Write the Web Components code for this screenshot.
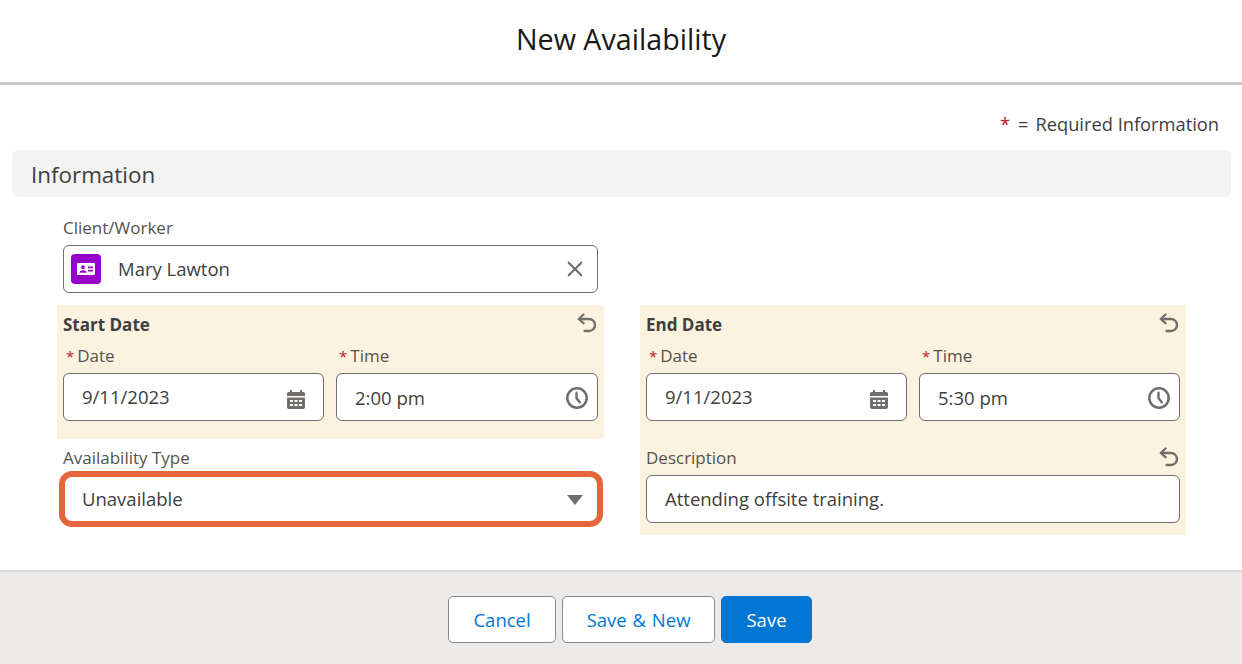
<!DOCTYPE html>
<html lang="en"><head><meta charset="utf-8"><title>New Availability</title>
<style>
html,body{margin:0;padding:0;height:664px;overflow:hidden;background:#fff;font-family:"Open Sans","Noto Sans",sans-serif;color:#3e3e3c}
</style></head><body>
<avail-modal>
  <modal-header slot="header">New Availability</modal-header>
  <required-note>Required Information</required-note>
  <section-title>Information</section-title>
  <form-grid>
    <lookup-row>
      <form-field label="Client/Worker"><text-box value="Mary Lawton" leading="contact" icon="close"></text-box></form-field>
    </lookup-row>
    <form-col>
      <edit-panel height="134">
        <group-title undo>Start Date</group-title>
        <field-pair>
          <form-field label="Date" required><text-box value="9/11/2023" icon="calendar"></text-box></form-field>
          <form-field label="Time" required><text-box value="2:00 pm" icon="clock"></text-box></form-field>
        </field-pair>
      </edit-panel>
      <plain-block>
        <form-field label="Availability Type"><text-box value="Unavailable" icon="caret" highlight></text-box></form-field>
      </plain-block>
    </form-col>
    <form-col>
      <edit-panel height="230">
        <group-title undo>End Date</group-title>
        <field-pair>
          <form-field label="Date" required><text-box value="9/11/2023" icon="calendar"></text-box></form-field>
          <form-field label="Time" required><text-box value="5:30 pm" icon="clock"></text-box></form-field>
        </field-pair>
        <desc-block>
          <form-field label="Description" undo><text-box value="Attending offsite training."></text-box></form-field>
        </desc-block>
      </edit-panel>
    </form-col>
  </form-grid>
  <modal-footer>
    <action-btn>Cancel</action-btn>
    <action-btn>Save &amp; New</action-btn>
    <action-btn brand>Save</action-btn>
  </modal-footer>
</avail-modal>
<script>
const UNDO='<svg class="undo" viewBox="0 0 20 20" width="20" height="20" fill="none" stroke="#706e6b" stroke-width="2.300" stroke-linecap="round" stroke-linejoin="round"><path d="M6.500 1.500 1.800 6 6.500 10.200"/><path d="M2.200 6H12a6 6 0 0 1 0 12H7.500"/></svg>';
const ICONS={
 close:'<svg viewBox="0 0 16 16" width="16" height="16" fill="none" stroke="#706e6b" stroke-width="2.100" stroke-linecap="round" style="margin-right:3px"><path d="M1.700 1.700 14.300 14.300M14.300 1.700 1.700 14.300"/></svg>',
 calendar:'<svg viewBox="0 0 18 20" width="18" height="20" style="margin:6px 7px 0 0"><path fill="#706e6b" d="M3 1h2v2h8V1h2v2h1.500A1.500 1.500 0 0 1 18 4.500V7H0V4.500A1.500 1.500 0 0 1 1.500 3H3zM0 8.500h18V18a2 2 0 0 1-2 2H2a2 2 0 0 1-2-2z"/><path fill="#fff" d="M3 11h3v2H3zM7.500 11h3v2h-3zM12 11h3v2h-3zM3 15h3v2H3zM7.500 15h3v2h-3zM12 15h3v2h-3z"/></svg>',
 clock:'<svg viewBox="0 0 22 22" width="22" height="22" fill="none" stroke="#706e6b" style="margin:4px -2px 0 0"><circle cx="11" cy="11" r="9.700" stroke-width="2.500"/><path d="M10.500 5.800v5.400l3.300 4" stroke-width="2.400" stroke-linecap="round" stroke-linejoin="round"/></svg>',
 caret:'<svg viewBox="0 0 16 10" width="16" height="10" style="margin:4px 3px 0 0"><path fill="#706e6b" d="M0 0h16L8 10z"/></svg>'
};
function def(name,css,html){
  customElements.define(name,class extends HTMLElement{
    connectedCallback(){
      if(this.shadowRoot)return;
      const r=this.attachShadow({mode:'open'});
      r.innerHTML='<style>'+css+'</style>'+(typeof html==='function'?html(this):html);
    }
  });
}
def('avail-modal',':host{display:flex;flex-direction:column;height:664px}main{flex:1;display:flex;flex-direction:column;min-height:0}','<slot name="header"></slot><main><slot></slot></main>');
def('modal-header',':host{display:flex;flex:none;align-items:center;justify-content:center;box-sizing:border-box;height:85px;border-bottom:3px solid #c9c9c9;padding-bottom:5px;font-size:28.700px;color:#181818}','<slot></slot>');
def('required-note',':host{display:flex;justify-content:flex-end;align-items:center;height:24px;margin-top:26px;margin-bottom:1px;padding-right:23px;font-size:18.300px;color:#3e3e3c}i{font-style:normal;color:#c4142e;margin-right:8px}b{font-weight:400;margin-right:7px}','<i>*</i><b>=</b><span><slot></slot></span>');
def('section-title',':host{display:block;box-sizing:border-box;height:47px;line-height:49px;margin:14px 11px 0 12px;padding-left:19px;background:#f3f3f3;border-radius:6px;font-size:22.400px;color:#3e3e3c}','<slot></slot>');
def('form-grid',':host{display:grid;grid-template-columns:547px 546px;column-gap:36px;padding:20px 0 0 57px}','<slot></slot>');
def('lookup-row',':host{display:block;grid-column:1;padding:0 6px;height:88px}','<slot></slot>');
def('form-col',':host{display:block;grid-row:2}','<slot></slot>');
def('edit-panel',':host{display:block;box-sizing:border-box;background:#fcf2e0;padding:8px 6px 0}',el=>{el.style.height=el.getAttribute('height')+'px';return '<slot></slot>'});
def('group-title',':host{display:flex;justify-content:space-between;align-items:flex-start;height:32px;font-size:17px;font-weight:700;color:#3e3e3c;line-height:24px}.undo{margin-right:1.500px}','<span><slot></slot></span>'+UNDO);
def('field-pair',':host{display:grid;grid-template-columns:261px 1fr;column-gap:12px}','<slot></slot>');
def('plain-block',':host{display:block;padding:8px 6px 0}','<slot></slot>');
def('desc-block',':host{display:block;margin-top:26px}','<slot></slot>');
def('form-field',':host{display:block}.l{display:flex;align-items:center;justify-content:space-between;box-sizing:border-box;height:28px;padding-bottom:7px;font-size:17px;color:#54524f}.t{display:flex;align-items:center}i{font-style:normal;font-size:15px;color:#c4142e;margin:0 3px 0 3px}.undo{align-self:flex-start;margin-right:1.500px}',el=>
 '<div class="l"><span class="t">'+(el.hasAttribute('required')?'<i>*</i>':'')+el.getAttribute('label')+'</span>'+(el.hasAttribute('undo')?UNDO:'')+'</div><slot></slot>');
def('text-box',':host{display:flex;align-items:center;box-sizing:border-box;position:relative;height:48px;background:#fff;border:1px solid #706e6b;border-radius:6px;padding:0 11px 2px 18px;font-size:18.500px;color:#3e3e3c}.v{flex:1}.v.low{padding-top:2px}.ring{position:absolute;top:-5px;bottom:-5px;left:-5px;right:-6px;border:6px solid #e5663d;border-radius:13px;pointer-events:none}.lead{display:flex;align-items:center;justify-content:center;width:30px;height:30px;margin:2px 17px 0 -11px;background:#9600c8;border-radius:4px;flex:none}.ic{display:flex;align-items:center}.ic.close{margin-top:2px}',el=>{
  const ic=el.getAttribute('icon');
  return (el.getAttribute('leading')?'<span class="lead"><svg viewBox="0 0 18 12" width="18" height="12"><path fill="#fff" fill-rule="evenodd" d="M1.300 0h15.400A1.300 1.300 0 0 1 18 1.300v9.400a1.300 1.300 0 0 1-1.300 1.300H1.300A1.300 1.300 0 0 1 0 10.700V1.300A1.300 1.300 0 0 1 1.300 0zM6 2.300a1.900 1.900 0 1 0 0 3.800 1.900 1.900 0 0 0 0-3.800zM2.400 9.700c0-1.500 1.300-2.500 3.600-2.500s3.600 1 3.600 2.500zM11 3.500v1.700h5V3.500zM11 6.800v1.700h5V6.800z"/></svg></span>':'')+
  '<span class="v'+(ic==='clock'?' low':'')+'">'+el.getAttribute('value')+'</span>'+(ic?'<span class="ic '+ic+'">'+ICONS[ic]+'</span>':'')+(el.hasAttribute('highlight')?'<span class="ring"></span>':'');
});
def('modal-footer',':host{display:flex;justify-content:center;gap:6px;box-sizing:border-box;height:94px;margin-top:auto;padding:24px 0 0 18px;background:#ecebea;border-top:2px solid #dddbda}','<slot></slot>');
def('action-btn',':host{display:flex;align-items:center;justify-content:center;box-sizing:border-box;height:47px;padding:0 24px;background:#fff;border:1px solid #8a8886;border-radius:5px;font-size:18.500px;word-spacing:1px;color:#0176d3}:host([brand]){background:#0176d3;border-color:#0176d3;color:#fff}','<slot></slot>');
</script>
</body></html>
